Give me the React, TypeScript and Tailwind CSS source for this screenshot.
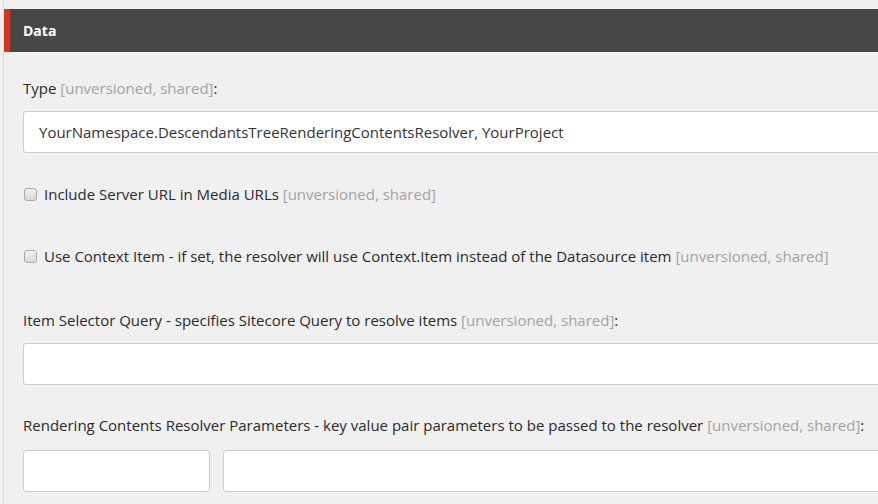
import React from "react";

const Meta = () => <span className="text-[#a3a3a3]">[unversioned, shared]</span>;

const Checkbox = () => (
  <span className="ml-[1px] mr-[7px] inline-block h-[13px] w-[13px] shrink-0 rounded-[3px] border border-[#a9a9a9] bg-gradient-to-b from-[#f2f2f2] to-[#d8d8d8]" />
);

const inputCls =
  "h-[42px] shrink-0 rounded-[3px] border border-[#cccccc] bg-white px-[15px] flex items-center text-[15px] text-[#333]";

export default function App() {
  return (
    <div
      className="h-[504px] w-[878px] overflow-hidden bg-[#f0f0f0] text-[15px] text-[#2b2b2b]"
      style={{ fontFamily: '"Open Sans", "Liberation Sans", sans-serif' }}
    >
      <div className="ml-[3px] h-full border-l border-[#dcdcdc] pt-[9px]">
        <div className="flex h-[43px] items-center border-l-[6px] border-[#e0301e] bg-[#474747] pl-[13px] text-[14px] font-bold text-white">
          Data
        </div>
        <div className="pl-[19px]">
          <div className="mt-[27px] leading-[18px]">
            Type <Meta />:
          </div>
          <div className={`${inputCls} mt-[14px] w-[900px]`}>
            YourNamespace.DescendantsTreeRenderingContentsResolver, YourProject
          </div>

          <div className="mt-[32px] flex items-center leading-[18px]">
            <Checkbox />
            <span>
              Include Server URL in Media URLs <Meta />
            </span>
          </div>

          <div className="mt-[44px] flex items-center leading-[18px] whitespace-nowrap">
            <Checkbox />
            <span>
              Use Context Item - if set, the resolver will use Context.Item instead of the Datasource item <Meta />
            </span>
          </div>

          <div className="mt-[46px] leading-[18px]">
            Item Selector Query - specifies Sitecore Query to resolve items <Meta />:
          </div>
          <div className={`${inputCls} mt-[14px] w-[900px]`} />

          <div className="mt-[31px] leading-[18px] whitespace-nowrap">
            Rendering Contents Resolver Parameters - key value pair parameters to be passed to the resolver <Meta />:
          </div>
          <div className="mt-[16px] flex gap-[13px]">
            <div className={`${inputCls} w-[187px]`} />
            <div className={`${inputCls} w-[700px]`} />
          </div>
        </div>
      </div>
    </div>
  );
}
